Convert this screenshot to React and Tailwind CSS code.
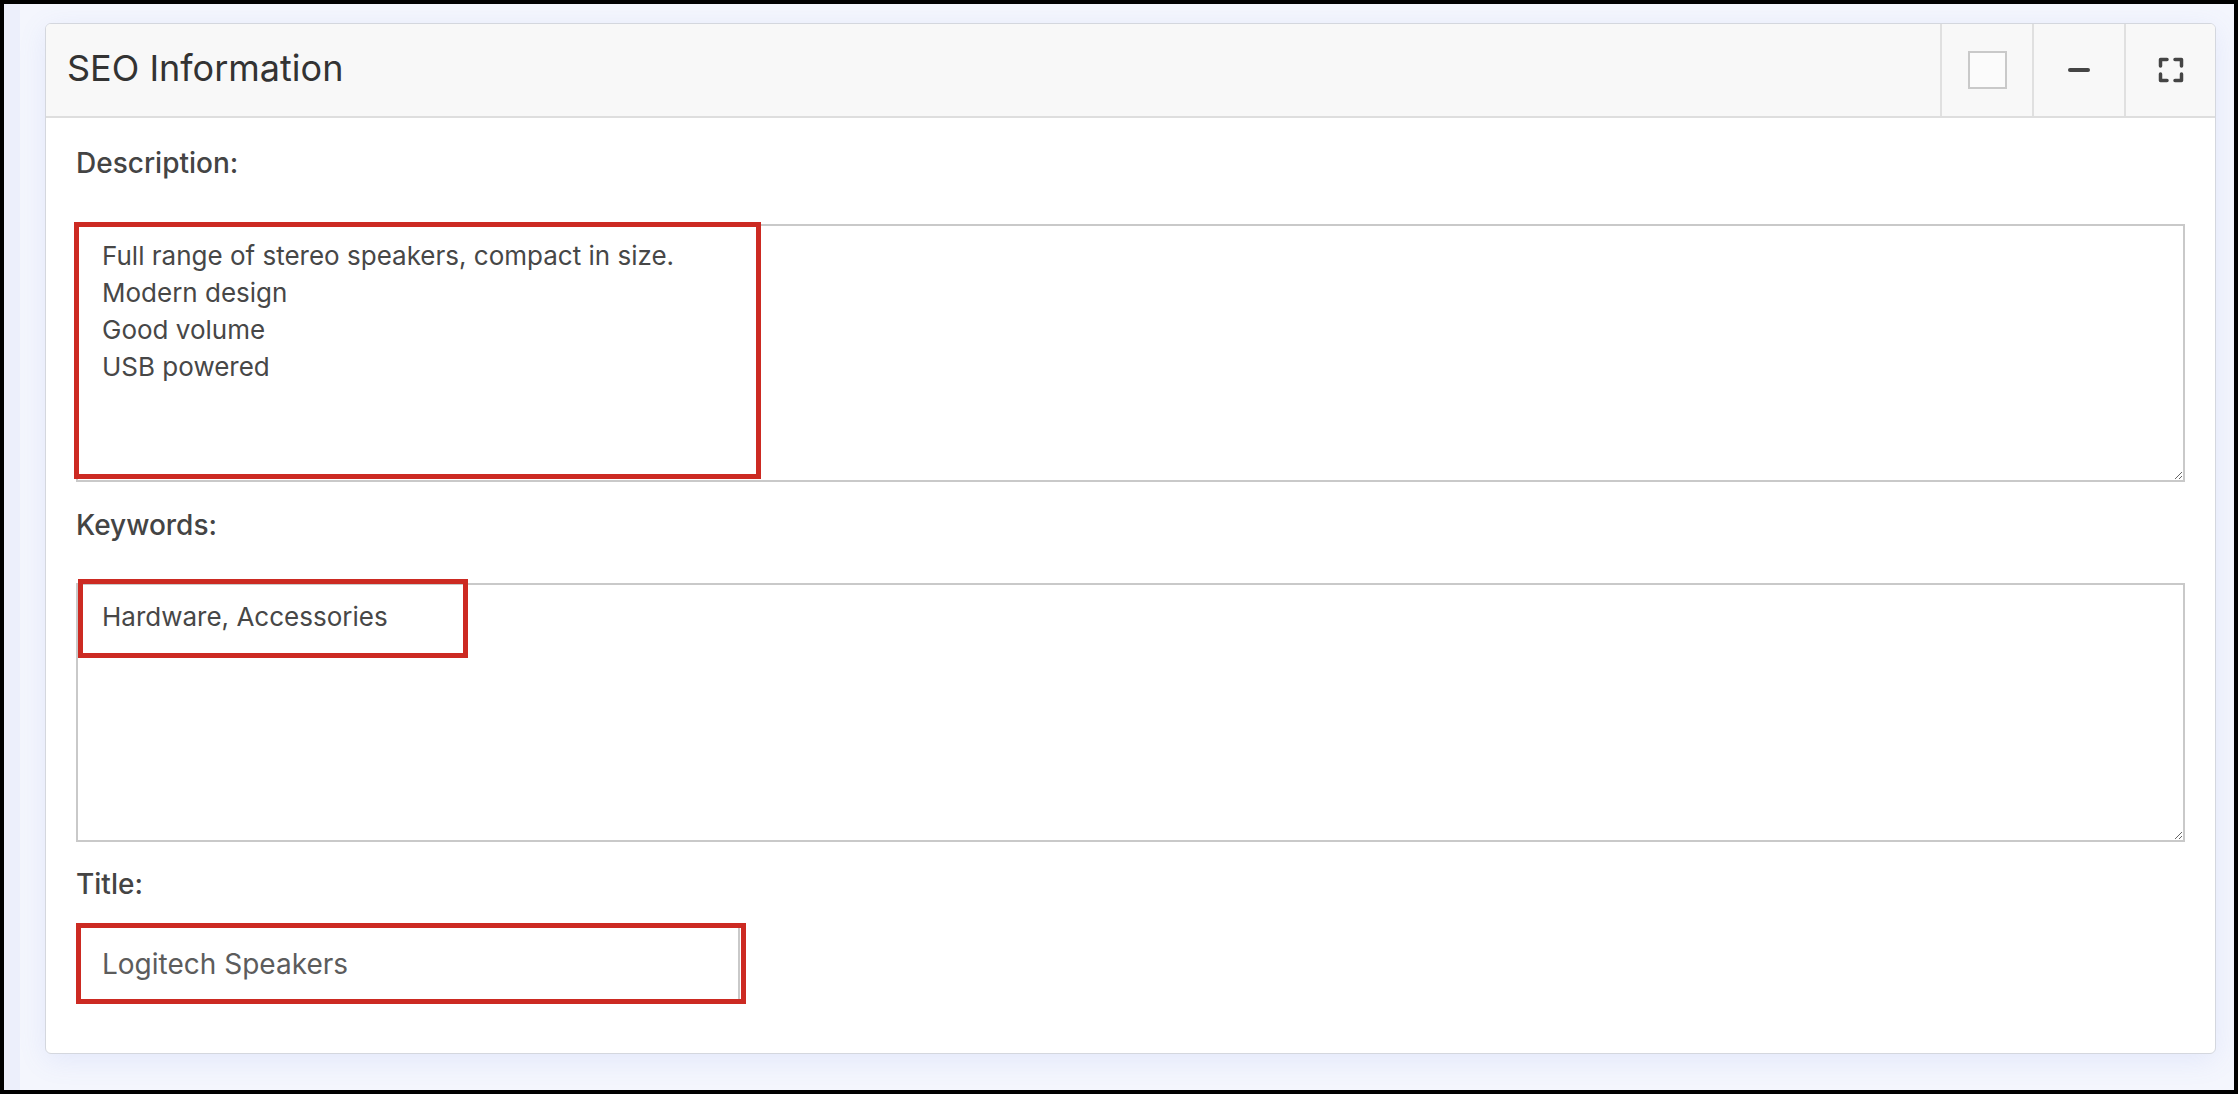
import React from "react";

const font = { fontFamily: "Inter, 'Noto Sans', sans-serif" };

function RedBox({ className }) {
  return (
    <div
      className={`pointer-events-none absolute border-[5px] border-[#cc2a22] ${className}`}
    />
  );
}

export default function App() {
  return (
    <div
      className="w-[2238px] h-[1094px] bg-black p-[4px] overflow-hidden"
      style={font}
    >
      <div className="flex h-full bg-[#f4f6fd]">
        {/* sidebar edge */}
        <div className="w-[16px] shrink-0 bg-[#eceffb]" />

        <div className="pl-[25px] pt-[19px]">
          {/* Card */}
          <div className="w-[2171px] h-[1031px] rounded-[6px] border border-[#d4d7de] bg-white shadow-[0_6px_28px_rgba(110,130,230,0.12)] flex flex-col overflow-hidden">
            {/* Header */}
            <div className="flex h-[94px] shrink-0 border-b-2 border-[#dedede] bg-[#f8f8f8]">
              <div className="flex flex-1 items-center pl-[21px] pb-[5px] text-[36px] text-[#333333]">
                SEO Information
              </div>
              <div className="flex w-[92px] items-center justify-center border-l-2 border-[#e0e0e0]">
                <div className="h-[38px] w-[39px] border-2 border-[#c9c9c9] bg-[#fbfbfb]" />
              </div>
              <div className="flex w-[92px] items-center justify-center border-l-2 border-[#e0e0e0]">
                <div className="h-[4px] w-[22px] rounded-full bg-[#454545]" />
              </div>
              <div className="flex w-[91px] items-center justify-center border-l-2 border-[#e0e0e0]">
                <svg width="26" height="26" viewBox="0 0 26 26" fill="none">
                  <path
                    d="M2.5 9V2.5H9M17 2.5H23.5V9M23.5 17V23.5H17M9 23.5H2.5V17"
                    stroke="#454545"
                    strokeWidth="3.5"
                    strokeLinecap="round"
                    strokeLinejoin="round"
                  />
                </svg>
              </div>
            </div>

            {/* Body */}
            <div className="flex flex-col px-[30px] pt-[25px]">
              <label className="h-[40px] leading-[40px] text-[28px] font-medium text-[#444444]">
                Description:
              </label>
              <div className="relative mt-[41px]">
                <textarea
                  readOnly
                  value={
                    "Full range of stereo speakers, compact in size.\nModern design\nGood volume\nUSB powered"
                  }
                  className="block h-[258px] w-full resize border-2 border-[#c9c9c9] bg-white px-[24px] pt-[11px] text-[26px] leading-[37px] text-[#474747] outline-none"
                  style={font}
                />
                <RedBox className="left-[-2px] top-[-2px] h-[257px] w-[687px]" />
              </div>

              <label className="mt-[23px] h-[40px] leading-[40px] text-[28px] font-medium text-[#444444]">
                Keywords:
              </label>
              <div className="relative mt-[38px]">
                <textarea
                  readOnly
                  value="Hardware, Accessories"
                  className="block h-[259px] w-full resize border-2 border-[#c9c9c9] bg-white px-[24px] pt-[13px] text-[26px] leading-[37px] text-[#474747] outline-none"
                  style={font}
                />
                <RedBox className="left-[2px] top-[-4px] h-[79px] w-[390px]" />
              </div>

              <label className="mt-[22px] h-[40px] leading-[40px] text-[28px] font-medium text-[#444444]">
                Title:
              </label>
              <div className="relative mt-[22px] w-[666px]">
                <input
                  readOnly
                  value="Logitech Speakers"
                  className="block h-[76px] w-[664px] border-2 border-[#c9c9c9] bg-white px-[24px] text-[28px] text-[#5c5c5c] outline-none"
                  style={font}
                />
                <RedBox className="left-[0px] top-[-3px] h-[81px] w-[670px]" />
              </div>
            </div>
          </div>
        </div>
      </div>
    </div>
  );
}
